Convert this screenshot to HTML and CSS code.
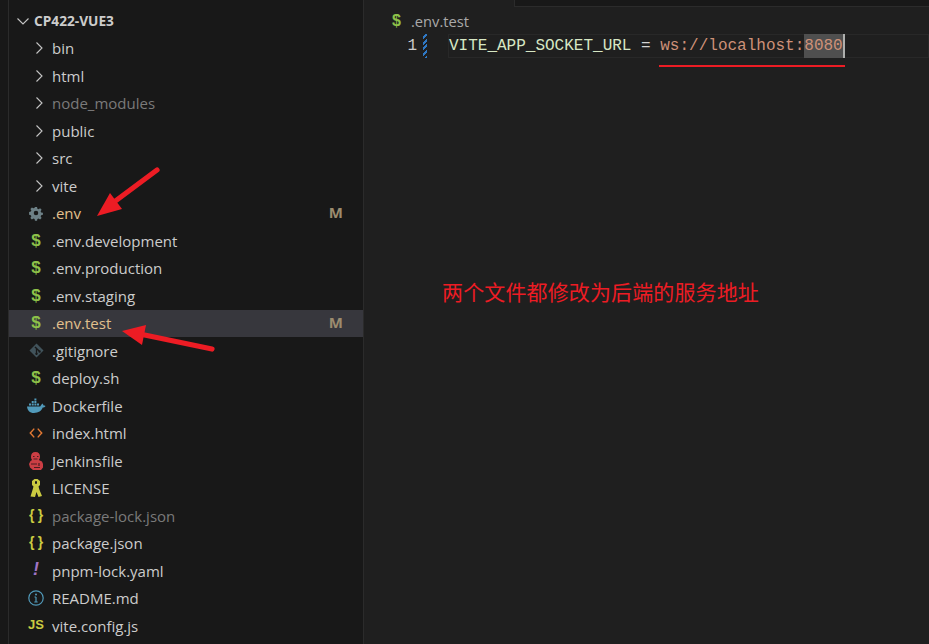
FILE: index.html
```html
<!DOCTYPE html>
<html lang="zh-CN">
<head>
<meta charset="utf-8">
<title>.env.test</title>
<link rel="stylesheet" href="styles.css">
</head>
<body>
<div class="app">
  <div class="rail"></div>
  <aside class="sidebar">
    <div class="root"><svg class="chev" viewBox="0 0 16 16"><path d="M2.500 5.500 8 11l5.500-5.500"/></svg><span>CP422-VUE3</span></div>
    <div class="row"><svg class="chev" viewBox="0 0 16 16"><path d="M5.500 2.500 11 8l-5.500 5.500"/></svg><span class="name">bin</span></div>
    <div class="row"><svg class="chev" viewBox="0 0 16 16"><path d="M5.500 2.500 11 8l-5.500 5.500"/></svg><span class="name">html</span></div>
    <div class="row dim"><svg class="chev" viewBox="0 0 16 16"><path d="M5.500 2.500 11 8l-5.500 5.500"/></svg><span class="name">node_modules</span></div>
    <div class="row"><svg class="chev" viewBox="0 0 16 16"><path d="M5.500 2.500 11 8l-5.500 5.500"/></svg><span class="name">public</span></div>
    <div class="row"><svg class="chev" viewBox="0 0 16 16"><path d="M5.500 2.500 11 8l-5.500 5.500"/></svg><span class="name">src</span></div>
    <div class="row"><svg class="chev" viewBox="0 0 16 16"><path d="M5.500 2.500 11 8l-5.500 5.500"/></svg><span class="name">vite</span></div>
    <div class="row mod"><span class="ico"><svg viewBox="0 0 16 16"><path class="gear" d="M6.800 1h2.400l.4 2 1.300.6 1.800-1.100 1.700 1.700-1.100 1.800.6 1.300 2 .4v2.400l-2 .4-.6 1.300 1.100 1.800-1.700 1.700-1.800-1.100-1.300.6-.4 2H6.800l-.4-2-1.300-.6-1.800 1.100-1.700-1.700 1.100-1.800-.6-1.300-2-.4V6.800l2-.4.6-1.300-1.100-1.800 1.700-1.700 1.800 1.100 1.300-.6zM8 5.400a2.600 2.600 0 1 0 0 5.200 2.600 2.600 0 0 0 0-5.200z"/></svg></span><span class="name">.env</span><span class="badge">M</span></div>
    <div class="row"><span class="ico dollar">$</span><span class="name">.env.development</span></div>
    <div class="row"><span class="ico dollar">$</span><span class="name">.env.production</span></div>
    <div class="row"><span class="ico dollar">$</span><span class="name">.env.staging</span></div>
    <div class="row mod selected"><span class="ico dollar">$</span><span class="name">.env.test</span><span class="badge">M</span></div>
    <div class="row"><span class="ico"><svg class="git-svg" viewBox="0 0 16 16"><path class="git" d="M8 .5 15.500 8 8 15.500.5 8zM5.800 4.600l1.500 1.500v4.300a1.300 1.300 0 1 0 1.400 0V7.500l1.300 1.300a1.300 1.300 0 1 0 1-1L7 3.600z"/></svg></span><span class="name">.gitignore</span></div>
    <div class="row"><span class="ico dollar">$</span><span class="name">deploy.sh</span></div>
    <div class="row"><span class="ico wide"><svg viewBox="0 0 20 16"><path class="docker" d="M1 8.500h13.200c.5-1.300 1.500-1.900 2-3 .9.500 1.300 1.200 1.300 2 .7 0 1.400.1 2 .6-.6 1.200-1.700 1.500-2.800 1.500C15.500 13 12.500 15 8 15c-4.500 0-6.500-2.500-7-6.500z"/><path class="docker" d="M3 5.500h2v2H3zM5.700 5.500h2v2h-2zM8.400 5.500h2v2h-2zM11 5.500h2v2h-2zM5.700 3h2v2h-2zM8.400 3h2v2h-2zM8.400.6h2v2h-2z"/></svg></span><span class="name">Dockerfile</span></div>
    <div class="row"><span class="ico"><svg viewBox="0 0 16 16"><path class="code" d="M6 3 1.500 8 6 13M10 3 14.500 8 10 13"/></svg></span><span class="name">index.html</span></div>
    <div class="row"><span class="ico"><svg class="jenkins-svg" viewBox="0 0 14 18"><path class="jenkins" d="M6.500 0C9.500 0 11 2 11 4.500c0 1.500-.4 2.700-1.200 3.600L13 9.500 14 12v3.500L12 18H4l-3-2.500L0 12l1.500-3 1.600-.9C2.300 7.200 2 6 2 4.500 2 2 3.500 0 6.500 0z"/><path class="jenkins-cut" d="M4 4.500h1.500M8 4.500h1.500M4.500 7h4M2 12h6M10 11v3M5 15.500h6"/></svg></span><span class="name">Jenkinsfile</span></div>
    <div class="row"><span class="ico"><svg class="license-svg" viewBox="0 0 12 18"><path class="license" d="M4.500 0h3L10 2v4L8.500 7.500 9.500 11 12 17l-3.500 1L6.500 13 5 18l-4.500-.5L2.500 11l1-3.500L2 6V2zM5 2.200v2.600h2V2.200z"/></svg></span><span class="name">LICENSE</span></div>
    <div class="row dim"><span class="ico braces">{ }</span><span class="name">package-lock.json</span></div>
    <div class="row"><span class="ico braces">{ }</span><span class="name">package.json</span></div>
    <div class="row"><span class="ico bang">!</span><span class="name">pnpm-lock.yaml</span></div>
    <div class="row"><span class="ico"><svg class="big" viewBox="0 0 16 16"><circle class="info" cx="8" cy="8" r="7.200"/><path class="info" d="M8 7v5M6.300 12h3.400M6.500 7H8"/><circle class="info-dot" cx="8" cy="4.500" r="1"/></svg></span><span class="name">README.md</span></div>
    <div class="row"><span class="ico js">JS</span><span class="name">vite.config.js</span></div>
  </aside>
  <main class="editor">
    <div class="top"><div class="peek"></div></div>
    <div class="crumbs"><span class="dollar">$</span><span class="crumb">.env.test</span></div>
    <div class="line">
      <span class="num">1</span>
      <span class="change"></span>
      <div class="code-line"><span class="key">VITE_APP_SOCKET_URL</span> <span class="eq">=</span> <span class="val">ws://localhost:<span class="sel">8080</span></span><span class="cursor"></span></div>
    </div>
    <div class="note-wrap"><p class="note">两个文件都修改为后端的服务地址</p></div>
  </main>
  <div class="underline"></div>
  <svg class="arrows" viewBox="0 0 929 644">
    <path class="shaft" d="M157 170 106 208"/>
    <path class="head" d="M97 216 110 193 122 209z"/>
    <path class="shaft" d="M212 349 135 333"/>
    <path class="head" d="M122 331 146 325 142 345z"/>
  </svg>
</div>
</body>
</html>
```
FILE: styles.css
```css
* { box-sizing: border-box; }
html, body { margin: 0; height: 100%; overflow: hidden; }
body { background: #1f1f1f; }
.app { display: flex; width: 929px; height: 644px; position: relative; overflow: hidden; }
.rail { width: 9px; background: #181818; border-right: 1px solid #2b2b2b; flex: none; }
.sidebar { width: 355px; flex: none; background: #181818; border-right: 1px solid #2b2b2b; padding-top: 7px; font-family: "Open Sans", "Noto Sans", sans-serif; font-size: 15px; color: #cccccc; }
.root { height: 27.5px; display: flex; align-items: center; padding-left: 6px; font-weight: 700; font-size: 13.7px; }
.root .chev { margin-right: 3px; }
.chev { width: 16px; height: 16px; fill: none; stroke: #c5c5c5; stroke-width: 1.100; flex: none; }
.row { height: 27.5px; display: flex; align-items: center; padding-left: 19px; padding-right: 20px; white-space: nowrap; }
.row .chev { margin-left: 3px; margin-right: 5px; }
.row.selected { background: #37373d; }
.dim .name { color: #7a7a7a; }
.mod .name { color: #e2c08d; }
.badge { margin-left: auto; margin-bottom: 2px; color: #9c8b6e; font-weight: 700; font-size: 15px; }
.ico { width: 16px; height: 20px; margin-right: 8px; flex: none; display: flex; align-items: center; justify-content: center; font-family: "Liberation Sans", sans-serif; }
.ico svg { width: 14px; height: 14px; display: block; overflow: visible; }
.ico.wide svg { width: 20px; height: 16px; }
.ico svg.big { width: 16px; height: 16px; }
.ico svg.git-svg { width: 15px; height: 15px; }
.ico svg.jenkins-svg { width: 14px; height: 18px; }
.ico svg.license-svg { width: 12px; height: 18px; }
.dollar { color: #8dc149; font-weight: 700; font-size: 17px; font-family: "Liberation Sans", sans-serif; }
.braces { color: #cbcb41; font-weight: 700; font-size: 14px; white-space: nowrap; padding-bottom: 2px; letter-spacing: -.3px; }
.bang { color: #a074c4; font-weight: 700; font-style: italic; font-size: 18px; padding-bottom: 2px; }
.js { color: #cbcb41; font-weight: 700; font-size: 13px; padding-bottom: 2px; }
.gear { fill: #6d8086; fill-rule: evenodd; }
.git { fill: #41535b; fill-rule: evenodd; }
.docker { fill: #519aba; }
.code { fill: none; stroke: #e37933; stroke-width: 1.700; }
.jenkins { fill: #cc3e44; }
.jenkins-cut { fill: none; stroke: #4a1d20; stroke-width: 1.200; }
.license { fill: #cbcb41; fill-rule: evenodd; }
.info { fill: none; stroke: #519aba; stroke-width: 1.200; }
.info-dot { fill: #519aba; }
.editor { flex: 1; min-width: 0; display: flex; flex-direction: column; background: #1f1f1f; }
.top { height: 7px; padding-left: 150px; flex: none; }
.peek { height: 7px; background: #181818; border-left: 1px solid #2b2b2b; border-bottom: 1px solid #2b2b2b; }
.crumbs { height: 27px; flex: none; display: flex; align-items: center; padding-left: 28px; font-family: "Open Sans", sans-serif; font-size: 14.700px; color: #a9a9a9; }
.crumbs .dollar { width: 19px; font-size: 16px; }
.line { height: 24px; flex: none; display: flex; font-family: "Liberation Mono", monospace; font-size: 16px; line-height: 24px; }
.num { width: 53px; text-align: right; color: #cccccc; flex: none; }
.change { width: 4px; margin-left: 6px; flex: none; background: repeating-linear-gradient(-45deg, #2f78c4 0 2px, #1f1f1f 2px 4px); }
.code-line { flex: 1; margin-left: 21px; padding-left: 1px; box-shadow: inset 0 0 0 1px #282828; white-space: pre; color: #d4d4d4; }
.key { color: #d7e7c4; }
.eq { color: #d4d4d4; }
.val { color: #ce9178; }
.sel { background: #4f4f4f; display: inline-block; height: 24px; }
.cursor { display: inline-block; width: 2px; height: 24px; background: #aeafad; vertical-align: top; }
.note-wrap { flex: 1; padding: 218px 0 0 78px; }
.note { margin: 0; color: #ed1c24; font-family: "Noto Sans CJK SC", sans-serif; font-size: 21px; letter-spacing: .13px; line-height: 30px; }
.underline { position: absolute; left: 659px; top: 65px; width: 186px; height: 2px; background: #ed1c24; }
.arrows { position: absolute; inset: 0; width: 929px; height: 644px; pointer-events: none; }
.shaft { fill: none; stroke: #ed1c24; stroke-width: 5.200; stroke-linecap: round; }
.head { fill: #ed1c24; }
```
